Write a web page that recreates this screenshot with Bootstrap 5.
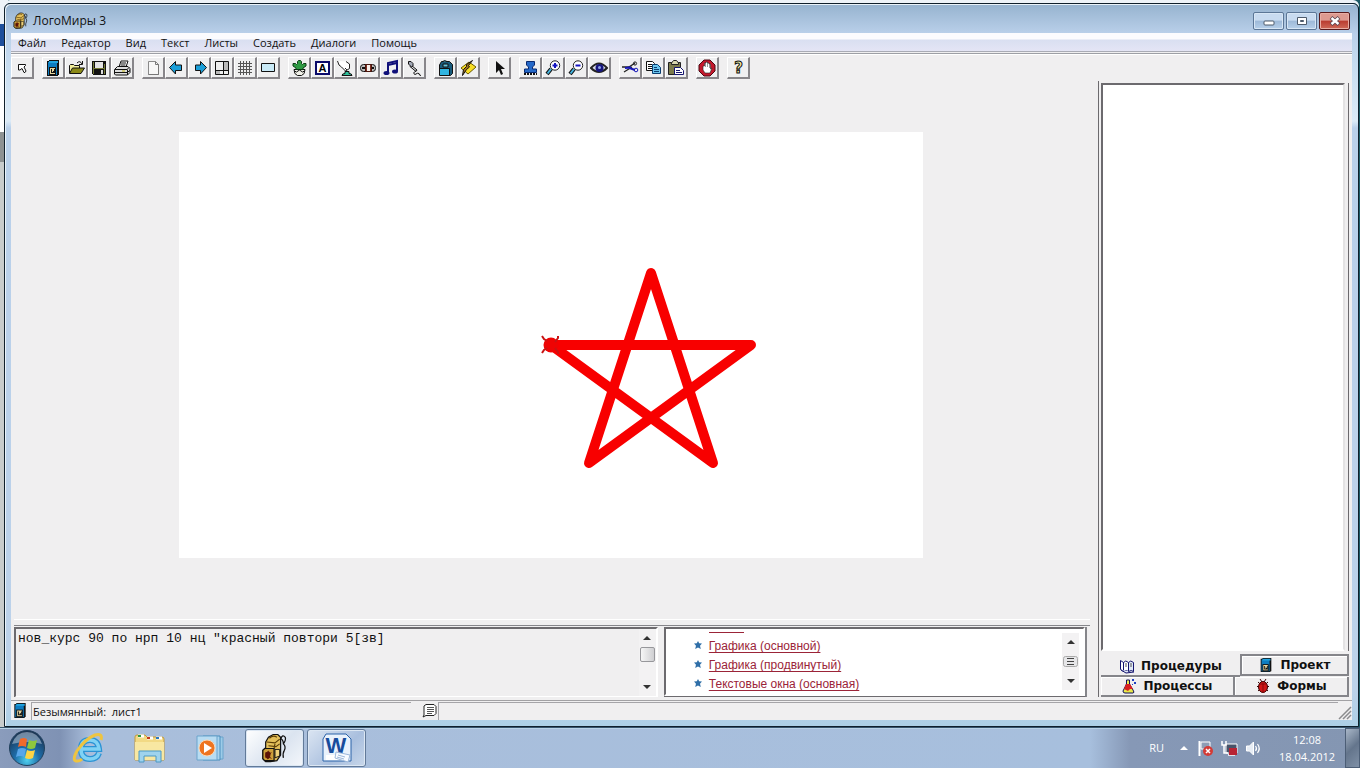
<!DOCTYPE html>
<html lang="ru">
<head>
<meta charset="utf-8">
<meta name="viewport" content="width=device-width, initial-scale=1">
<title>ЛогоМиры 3</title>
<link href="https://cdn.jsdelivr.net/npm/bootstrap@5.3.0/dist/css/bootstrap.min.css" rel="stylesheet">
<style>
:root { --face: #f0eff0; --shade: #85858a; --dark: #6c6a6e; --ui: "Open Sans", "Noto Sans", sans-serif; }
body { font-family: var(--ui); font-size: 11px; line-height: 16px; color: #111; background: #1c5a66 linear-gradient(#eef3f8 0 24px, #1e4f9c 24px 46px, #fff 46px 132px, #8d9192 132px 162px, #c8cccc 162px) 0 0 / 8px 100% no-repeat; }
button { font: inherit; color: inherit; background: none; border: 0; padding: 0; }
svg { display: block; flex: none; }
.app-window { margin: 3px 1px 0 4px; border: 1px solid #10202c; border-radius: 6px 6px 0 0; padding: 0 6px 6px; background: linear-gradient(#96b3cf, #bad0ea 30px, #c6dcf0 60px, #dcebf7 117px, #b9d0ea 124px, #bcd2ea 95%, #add0e6); box-shadow: inset 1px 1px 0 #eaf3fa, 0 -3px 0 #eef3f8; min-height: 0; }
.title-bar { height: 29px; padding: 5px 2px 0 2px; }
.title-bar h1 { font-size: 12px; line-height: 16px; }
.win-group { gap: 2px; }
.win-btn { width: 31px; height: 18px; border: 1px solid #5b7696; border-radius: 2px; background: linear-gradient(#c8dbf0 45%, #9db9d8 50%, #b7d0ea); box-shadow: inset 0 0 0 1px #d7e6f5; }
.win-close { border-color: #581a1c; background: linear-gradient(#dd9a90 45%, #b93c30 50%, #cf6a58); box-shadow: inset 0 0 0 1px #e8aea4; }
.client { background: var(--face); min-height: 0; }
.menu-bar { height: 19px; padding: 2px 0 0 7px; gap: 15px; background: linear-gradient(#fbfbfe 6px, #d9dff1 7px, #e4e5f5); border-bottom: 1px solid #a9abb5; }
.tool-bar { height: 28px; margin-top: 1px; border-top: 1px solid #9d9fa5; padding-top: 3px; gap: 8px; box-shadow: inset 0 1px 0 #fff; }
.tool-btn { width: 23px; height: 22px; padding: 1px 0 0 1px; border: solid; border-width: 1px 2px 2px 1px; border-color: #fff #88868a #88868a #fff; background: #efeff0; }
.work { min-height: 0; }
.stage { flex: 1 1 0; min-height: 0; padding-bottom: 10px; }
.sheet { width: 100%; max-width: 744px; background: #fff; }
.splitter { height: 7px; border-top: 1px solid #fff; border-bottom: 1px solid var(--shade); margin-left: 3px; }
.panels { display: grid; grid-template-columns: 60% 1fr; gap: 6px; margin: 1px 3px 0 3px; height: 70px; }
.sunken { border: 2px solid; border-color: var(--dark) #fff #fff var(--dark); }
.command { flex: 1; resize: none; border: 0; outline: 0; background: transparent; padding: 2px 0 0 2px; font: 13px/16px "Liberation Mono", monospace; color: #111; }
.scroller { width: 17px; background: #f3f2f3; }
.scroller button { height: 18px; }
.thumb { height: 15px; width: 15px; border: 1px solid #97979b; border-radius: 2px; background: linear-gradient(90deg, #f6f6f6, #cfcfd2); }
.help-box { background: #fff; overflow: hidden; }
.help-list { margin: 0 0 0 28px; }
.help-list li { height: 19px; gap: 7px; }
.help-list a { font: 12px/19px "Liberation Sans", Arial, sans-serif; color: #9b2438; text-underline-offset: 2px; }
.help-list .help-top { height: 8px; padding-left: 15px; }
.help-top a { width: 35px; height: 4px; border-bottom: 1px solid #9b2438; }
.right-rule { border-right: 2px solid var(--shade); border-bottom: 2px solid var(--dark); }
.side { width: 251px; margin-right: 3px; border-left: 1px solid var(--dark); padding-left: 2px; }
.code-box { background: #fff; resize: none; outline: 0; border: 2px solid; border-color: var(--dark) #e4e3e4 #fff var(--dark); min-height: 0; }
.side-frame { border-right: 1px solid var(--dark); padding: 0 3px 0 0; min-height: 0; margin-top: 2px; }
.tabs { margin-top: 3px; }
.tab { font: bold 12px/18px "DejaVu Sans", sans-serif; gap: 6px; height: 20px; border: solid var(--shade); border-width: 0 2px 2px 0; box-shadow: inset 1px 1px 0 #fff; }
.tab-open { height: 23px; padding-top: 2px; border-width: 0 0 2px 0; box-shadow: none; }
.tab-back { border-width: 2px; height: 22px; }
.status { height: 20px; margin-top: 3px; border-top: 1px solid #a2a1a4; }
.status-cell { border: solid #a5a4a8; border-width: 1px 0 0 1px; height: 18px; padding-left: 1px; line-height: 17px; }
.file-cell { width: 380px; margin: 0 10px 0 2px; }
.task-bar { height: 41px; background: linear-gradient(90deg, #8a9cbc, #7f92b4 60px, #a9bedb 90px, #a7bfdd 1090px, #8698b6 1130px, #8496b2); border-top: 1px solid #38566e; box-shadow: inset 0 1px 0 #b9d2e6; }
.pinned { gap: 25px; margin: 0 18px 0 8px; }
.running { gap: 3px; }
.task-btn { width: 59px; height: 38px; border: 1px solid #627a99; border-radius: 3px; background: linear-gradient(135deg, #dbe5f2, #a9bfde 60%, #c8d7ea); box-shadow: inset 0 0 0 1px #dce7f3; }
.task-on { background: linear-gradient(135deg, #fff, #dbe4f0 55%, #f4f7fb); }
.tray { color: #fff; gap: 7px; }
.clock { line-height: 17px; width: 76px; }
.show-desktop { width: 15px; border: 1px solid #4c5e76; background: linear-gradient(135deg, #a9b7c8, #64758c 50%, #7f90a6); }
</style>
</head>
<body class="vh-100 overflow-hidden d-flex flex-column">

<svg width="0" height="0" class="position-absolute" aria-hidden="true">
  <symbol id="pack" viewBox="0 0 30 32">
    <path d="M21 6q2-6 5-2 1 3-2 7 3 3 1 7-2 3-1 8M20 5q4 1 4 6" fill="none" stroke="#111" stroke-width="1.3"/>
    <path d="M5 9l3-5 5-3h5l3 3v19l-4 6-7 1H5l-3-3V18l3-3z" fill="#e3bf5a" stroke="#111" stroke-width="1.3"/>
    <path d="M6 9l9 1 5-4M15 11l-1 5M8 13l8 1 4-3M9 5q4-4 8-1" fill="none" stroke="#5a3c05" stroke-width="1.2"/>
    <path d="M2 18l2-2h10v13H4l-2-2z" fill="#cda03a" stroke="#111" stroke-width="1.3"/><path d="M15 17h5v7l-5 2z" fill="#f0d27a" stroke="#111"/>
    <path d="M8 19l2 2-1 5-2 1-2-2V21zM5 20l6 7M11 20l-6 6" fill="#5d1408" stroke="#5d1408"/>
  </symbol>
  <symbol id="cabinet" viewBox="0 0 18 18"><path d="M3 2h2V1h10v15h-1v1H3z" fill="#111"/><path d="M4 3h9v13H4z" fill="#0d7cc0"/><path d="M5 2h9v2H5z" fill="#1fa3e0"/><path d="M5 8h7v8H5z" fill="#111"/><path d="M6 9h5v6H6z" fill="#e8d7a0"/><path d="M7 10h1v2h2v-2h1v4H7z" fill="#111"/><path d="M8 12h1v1H8z" fill="#e8d7a0"/></symbol>
  <symbol id="star" viewBox="0 0 8 8"><path d="M4 0l1.200 2.300L8 2.600 6 4.800 6.800 8 4 6.600 1.200 8 2 4.800 0 2.600l2.800-.3z" fill="#2f6fa8"/></symbol>
</svg>

<main class="app-window flex-grow-1 d-flex flex-column">
  <header class="title-bar d-flex align-items-center">
    <svg width="16" height="18"><use href="#pack"/></svg>
    <h1 class="m-0 ms-1 flex-grow-1 fw-normal">ЛогоМиры 3</h1>
    <div class="win-group d-flex">
      <button class="win-btn" aria-label="Свернуть"><svg class="mx-auto mt-1" width="12" height="6"><rect x="1" y="1" width="10" height="4" rx="1" fill="#fff" stroke="#4d5a6b"/></svg></button>
      <button class="win-btn" aria-label="Развернуть"><svg class="mx-auto" width="12" height="10"><path d="M1.500 1.500h9v7h-9z" fill="#fff" stroke="#4d5a6b"/><path d="M4.500 4.500h3v1h-3z" fill="#9db9d8" stroke="#4d5a6b"/></svg></button>
      <button class="win-btn win-close" aria-label="Закрыть"><svg class="mx-auto" width="12" height="10"><path d="M2 1.500l8 7M10 1.500l-8 7" stroke="#5b4650" stroke-width="4"/><path d="M2.500 2l7 6M9.500 2l-7 6" stroke="#fff" stroke-width="2.400"/></svg></button>
    </div>
  </header>

  <div class="client flex-grow-1 d-flex flex-column">
    <nav class="menu-bar d-flex align-items-center" aria-label="Меню">
      <button>Файл</button><button>Редактор</button><button>Вид</button><button>Текст</button><button>Листы</button><button>Создать</button><button>Диалоги</button><button>Помощь</button>
    </nav>

    <div class="tool-bar d-flex" role="toolbar" aria-label="Инструменты">
      <div class="d-flex">
        <button class="tool-btn" aria-label="Свернуть лист"><svg width="18" height="18"><path d="M5.500 5.500h7v1l-1.500 1.500 2 4-1 1.500h-1l-2-4-2 1.500h-1.500z" fill="#fff" stroke="#111"/></svg></button>
      </div>
      <div class="d-flex">
        <button class="tool-btn" aria-label="Новый проект"><svg width="18" height="18"><use href="#cabinet"/></svg></button>
        <button class="tool-btn" aria-label="Открыть"><svg width="18" height="18"><path d="M2.500 14V6.500l1-1h3l1 1h5V9" fill="#f3ef9a" stroke="#111"/><path d="M2.500 14.500l3-5.500h12l-3.500 5.500z" fill="#8c8a18" stroke="#111"/><path d="M10 4q3-3 5 1M15.500 2v3.500H12" fill="none" stroke="#111"/></svg></button>
        <button class="tool-btn" aria-label="Сохранить"><svg width="18" height="18" shape-rendering="crispEdges"><path d="M2 2h14v14H3l-1-1z" fill="#111"/><path d="M3 3h1v12H3zM14 5h1v10h-1zM4 9h10v1H4z" fill="#737a35"/><path d="M5 3h8v6H5z" fill="#e4e4e4"/><path d="M11 11h2v4h-2z" fill="#ddd"/></svg></button>
        <button class="tool-btn" aria-label="Печать"><svg width="18" height="18"><path d="M6 8l2-6h7l-2 6" fill="#fff" stroke="#111"/><path d="M8 4h5M7.500 6h5" stroke="#111"/><path d="M1.500 10.500l3-3H15l2 2v4L14.500 16h-12l-1-1z" fill="#ddd" stroke="#111"/><path d="M2 10.500h12l2-2M2 13.500h12l3-2M14.500 10.500V16" fill="none" stroke="#111"/><path d="M9 12h3" stroke="#c5b813"/></svg></button>
      </div>
      <div class="d-flex">
        <button class="tool-btn" aria-label="Новый лист"><svg width="18" height="18"><path d="M4.500 2.500h7l3 3v10h-10z" fill="#f7f7f7" stroke="#8a8a8a"/><path d="M11.500 2.500v3h3v10h-10" fill="none" stroke="#777"/></svg></button>
        <button class="tool-btn" aria-label="Предыдущий лист"><svg width="18" height="18"><path d="M2.500 8.500l6-6v3.500h6v5.500h-6V15z" fill="#1a9ed8" stroke="#111"/></svg></button>
        <button class="tool-btn" aria-label="Следующий лист"><svg width="18" height="18"><path d="M16.500 8.500l-6-6v3.500h-5v5.500h5V15z" fill="#1a9ed8" stroke="#111"/></svg></button>
        <button class="tool-btn" aria-label="Расположение"><svg width="18" height="18"><path d="M2.500 2.500h13v13h-13z" fill="#eee" stroke="#111"/><path d="M11 3h4v8h-4zM3 12h4v3H3z" fill="#b9b9b9"/><path d="M10.500 3v12M3 11.500h8M11 11.500h4" stroke="#111"/></svg></button>
        <button class="tool-btn" aria-label="Сетка"><svg width="18" height="18"><path d="M4.500 2v14M7.500 2v14M10.500 2v14M13.500 2v14M2 4.500h14M2 7.500h14M2 10.500h14M2 13.500h14" stroke="#555"/></svg></button>
        <button class="tool-btn" aria-label="Показ"><svg width="18" height="18"><path d="M2.500 4.500h13v8h-13z" fill="#c9eaf7" stroke="#111"/></svg></button>
      </div>
      <div class="d-flex">
        <button class="tool-btn" aria-label="Черепашка"><svg width="18" height="18"><path d="M4 10.500h11q0 5-3.500 6h-4Q4 15.500 4 10.500z" fill="#f0f0e8" stroke="#111"/><path d="M7.500 4.500v-2l1-1h2l1 1v2l1 1 1-1h2.500v2.500l-3 2v1.500h-7V9l-3-2V4.500h2.500l1 1z" fill="#2e9a43" stroke="#0c3d16"/><path d="M4.500 12l2 1 3-2 3 2 2-1" fill="none" stroke="#111"/></svg></button>
        <button class="tool-btn" aria-label="Текстовое окно"><svg width="18" height="18"><path d="M3 3h13v12H3z" fill="#fff" stroke="#0a0a6a" stroke-width="2"/><text x="9.500" y="13" text-anchor="middle" font-family="Liberation Sans" font-size="11" font-weight="bold">A</text></svg></button>
        <button class="tool-btn" aria-label="Кнопка"><svg width="18" height="18"><path d="M1.500 2q1 5 4 6l4 4 4-2.500V5L10 2.500M9 9l2 2" fill="#fff" stroke="#222"/><path d="M6 16.500q0-2 3-2v-2h4v2q3 0 3 2z" fill="#2fc09b" stroke="#111"/></svg></button>
        <button class="tool-btn" aria-label="Бегунок"><svg width="18" height="18"><rect x="1.500" y="5.500" width="15" height="7" rx="3" fill="#bbb" stroke="#111"/><path d="M3 9h12" stroke="#111" stroke-width="2"/><path d="M6.500 5.500h6v7h-6z" fill="#7c2e20" stroke="#4a150c"/><path d="M8 6h3v6H8z" fill="#f7f0ea"/></svg></button>
        <button class="tool-btn" aria-label="Мелодия"><svg width="18" height="18"><path d="M6 13V4l9-2v10" fill="none" stroke="#10107a" stroke-width="2"/><path d="M6 6l9-2" stroke="#10107a" stroke-width="2"/><ellipse cx="4.500" cy="14" rx="3" ry="2" fill="#10107a"/><ellipse cx="13" cy="12.500" rx="3" ry="2" fill="#10107a"/></svg></button>
        <button class="tool-btn" aria-label="Запись"><svg width="18" height="18"><path d="M6 6l6 5-1 1.500-6-5z" fill="#ddd" stroke="#111"/><path d="M3.500 2.500h2.500l2 2V7L6.500 8 3.500 5z" fill="#a4aab8" stroke="#111"/><path d="M11 12q-4 2-1 3.500 3-2 4-1 0 2 2 2" fill="none" stroke="#111"/></svg></button>
      </div>
      <div class="d-flex">
        <button class="tool-btn" aria-label="Ресурсы"><svg width="18" height="18"><path d="M3.500 6l2-3.500h8l3 3v9l-2 2h-11z" fill="#17597a" stroke="#111"/><path d="M7 2.500q1-2 4 0M7 5h5v3H7z" fill="#65c5df" stroke="#111"/><path d="M4 10h9v6H4z" fill="#31b5e2"/><path d="M3.500 9.500h10V16" fill="none" stroke="#111"/></svg></button>
        <button class="tool-btn" aria-label="Рисовалка"><svg width="18" height="18"><path d="M2 9l8-6 7 5-8 7z" fill="#f8de24" stroke="#6a5a00"/><path d="M13.500 1.500l-4 5 1 1.500-3 2.500-4 6 1-6 3-3v-2z" fill="#a3711c" stroke="#111"/></svg></button>
      </div>
      <div class="d-flex">
        <button class="tool-btn" aria-label="Указатель"><svg width="18" height="18"><path d="M6 2v12l3-3 2 5 2-1-2-5h4z" fill="#111"/></svg></button>
      </div>
      <div class="d-flex">
        <button class="tool-btn" aria-label="Штамп"><svg width="18" height="18"><path d="M5.500 2.500h8V6l-2 2v2h4v3.500h-12V10h4V8l-2-2z" fill="#2468c8" stroke="#0a2a70"/><path d="M3 15h13" stroke="#111" stroke-width="2" stroke-dasharray="2 1"/></svg></button>
        <button class="tool-btn" aria-label="Увеличить"><svg width="18" height="18"><path d="M7 10l-4 5" stroke="#111" stroke-width="4"/><path d="M7 10l-3.500 4.500" stroke="#45b5e0" stroke-width="2"/><circle cx="11" cy="6.500" r="4.700" fill="#fff" stroke="#222"/><path d="M11 4v5M8.500 6.500h5" stroke="#1414c0" stroke-width="2"/></svg></button>
        <button class="tool-btn" aria-label="Уменьшить"><svg width="18" height="18"><path d="M7 10l-4 5" stroke="#111" stroke-width="4"/><path d="M7 10l-3.500 4.500" stroke="#45b5e0" stroke-width="2"/><circle cx="11" cy="6.500" r="4.700" fill="#fff" stroke="#222"/><path d="M8.500 6.500h5" stroke="#1414c0" stroke-width="2"/></svg></button>
        <button class="tool-btn" aria-label="Глаз"><svg width="18" height="18"><path d="M1 9q8-9 16 0-8 8-16 0z" fill="#d8dce8" stroke="#222" stroke-width="2"/><circle cx="9.500" cy="9" r="4" fill="#16167e"/><circle cx="9.500" cy="8.500" r="1.500" fill="#8fa5e8"/></svg></button>
      </div>
      <div class="d-flex">
        <button class="tool-btn" aria-label="Вырезать"><svg width="18" height="18"><path d="M1 8h7l6-4M3 13l8-5" stroke="#222" stroke-width="1.300" fill="none"/><path d="M7 8.500l7 2.500M4 9l6-.5" stroke="#1818b8" stroke-width="2"/><circle cx="14" cy="4.500" r="1.600" fill="none" stroke="#222"/><circle cx="15" cy="11" r="1.800" fill="none" stroke="#1818b8"/></svg></button>
        <button class="tool-btn" aria-label="Копировать"><svg width="18" height="18"><path d="M2.500 2.500h6l2 2v7h-8z" fill="#fff" stroke="#111"/><path d="M4 5.500h4M4 7.500h4M4 9.500h4" stroke="#111"/><path d="M8.500 5.500h5l3 3v6h-8z" fill="#69c5ee" stroke="#0a3d70"/><path d="M10 8.500h3M10 10.500h5M10 12.500h5" stroke="#0a3d70"/></svg></button>
        <button class="tool-btn" aria-label="Вставить"><svg width="18" height="18"><path d="M1.500 3.500h12v12h-12z" fill="#7b7a4b" stroke="#222"/><path d="M4.500 5.500V4l2-2.500h3l2 2.500v1.500z" fill="#d9d8b0" stroke="#222"/><path d="M7.500 8.500h6l3 3v4h-9z" fill="#fff" stroke="#14146e"/><path d="M9 11.500h4M9 13.500h6" stroke="#14146e"/></svg></button>
      </div>
      <div class="d-flex">
        <button class="tool-btn" aria-label="Остановить всё"><svg width="18" height="18"><path d="M6 1h6l5 5v6l-5 5H6l-5-5V6z" fill="#c4182c" stroke="#4c0710"/><path d="M5 7h1.500V4H8V3h1.500v1H11v1h1.500v5L14 9l-2 5H7L5 11z" fill="#fff" stroke="#222" stroke-width=".6"/><path d="M7.500 4v4M9.500 4v4M11.500 5v4" stroke="#555" stroke-width=".6"/></svg></button>
      </div>
      <div class="d-flex">
        <button class="tool-btn" aria-label="Справка"><svg width="18" height="18"><text x="9.500" y="14" text-anchor="middle" font-family="DejaVu Sans" font-size="15" font-weight="bold" fill="#f3eda0" stroke="#111">?</text></svg></button>
      </div>
    </div>

    <div class="work flex-grow-1 d-flex">
      <section class="flex-grow-1 d-flex flex-column overflow-hidden">
        <div class="stage d-flex align-items-center justify-content-center">
          <svg class="sheet" viewBox="0 0 744 426" role="img" aria-label="Звезда">
            <path d="M372 213H572L410 331 472 141 534 331Z" fill="none" stroke="#f80000" stroke-width="10" stroke-linejoin="round"/>
            <circle cx="372" cy="213" r="7.500" fill="#ee0404"/>
            <path d="M363 204l2 3 3 2M379 204v2l-3 4M363 221l2-3 3-2M379 222v-2l-3-4" fill="none" stroke="#c81414" stroke-width="2"/>
          </svg>
        </div>
        <div class="splitter"></div>
        <div class="panels">
          <div class="sunken d-flex">
            <textarea class="command" aria-label="Командный центр" spellcheck="false">нов_курс 90 по нрп 10 нц "красный повтори 5[зв]</textarea>
            <div class="scroller d-flex flex-column align-items-center">
              <button aria-label="Вверх"><svg width="8" height="4"><path d="M0 4l4-4 4 4z" fill="#333"/></svg></button>
              <div class="thumb"></div>
              <button class="mt-auto" aria-label="Вниз"><svg width="8" height="4"><path d="M0 0l4 4 4-4z" fill="#333"/></svg></button>
            </div>
          </div>
          <div class="right-rule d-flex">
            <div class="sunken help-box flex-grow-1 d-flex">
              <ul class="help-list list-unstyled flex-grow-1">
                <li class="help-top d-flex"><a href="#" aria-label="К началу раздела"></a></li>
                <li class="d-flex"><svg class="mt-1" width="8" height="8"><use href="#star"/></svg><a href="#">Графика (основной)</a></li>
                <li class="d-flex"><svg class="mt-1" width="8" height="8"><use href="#star"/></svg><a href="#">Графика (продвинутый)</a></li>
                <li class="d-flex"><svg class="mt-1" width="8" height="8"><use href="#star"/></svg><a href="#">Текстовые окна (основная)</a></li>
              </ul>
              <div class="scroller d-flex flex-column align-items-center my-1 me-1">
                <button aria-label="Вверх"><svg width="8" height="4"><path d="M0 4l4-4 4 4z" fill="#333"/></svg></button>
                <svg class="my-auto" width="15" height="11"><rect x=".5" y=".5" width="14" height="10" rx="2" fill="#e6e6e8" stroke="#aaa"/><path d="M4 2.500h7M4 5.500h7M4 8.500h7" stroke="#444"/></svg>
                <button aria-label="Вниз"><svg width="8" height="4"><path d="M0 0l4 4 4-4z" fill="#333"/></svg></button>
              </div>
            </div>
          </div>
        </div>
      </section>

      <aside class="side d-flex flex-column flex-shrink-0 ms-2">
        <div class="side-frame flex-grow-1 d-flex"><textarea class="code-box w-100" aria-label="Процедуры"></textarea></div>
        <div role="tablist" class="tabs">
          <div class="d-flex align-items-start">
            <button class="tab tab-open d-flex align-items-center justify-content-center" style="width:56%" role="tab" aria-selected="true"><svg width="16" height="16"><path d="M1.500 2.500l3 2v9l-3-2zM4.500 4.500q2-3 5 0v9q-2-2-5 0z" fill="#fff" stroke="#14146e"/><path d="M9.500 4.500q2-3 5 0v9q-2-2-5 0zM2 12l5 3 8-1" fill="#dfe8f8" stroke="#14146e"/><path d="M6 6h2M6 8h2M11 6h2M11 8h2" stroke="#555"/></svg>Процедуры</button>
            <button class="tab tab-back d-flex align-items-center justify-content-center flex-grow-1" role="tab"><svg width="16" height="16"><use href="#cabinet"/></svg>Проект</button>
          </div>
          <div class="d-flex">
            <button class="tab d-flex align-items-center justify-content-center" style="width:54%" role="tab"><svg width="16" height="16"><path d="M5.500 2v4L2 13q0 2 2 2h8q2 0 0-3L8.500 6V2z" fill="#e8e84a" stroke="#10105a"/><path d="M5 6h4l3 5-3 0-2 2-4-2z" fill="#d82020"/><path d="M11 1h2v2h-2zM13 4h2v2h-2zM11 6h1v1h-1z" fill="#2040c0"/></svg>Процессы</button>
            <button class="tab d-flex align-items-center justify-content-center flex-grow-1" role="tab"><svg width="16" height="16"><path d="M3 4l10 9M13 4L3 13M2 8.500h12M5 1l2 3M11 1L9 4" stroke="#3c0404"/><ellipse cx="8" cy="9" rx="4.500" ry="5.500" fill="#d01616" stroke="#3c0404"/><path d="M8 5v10M4.500 6h7" stroke="#8c0808"/></svg>Формы</button>
          </div>
        </div>
      </aside>
    </div>

    <footer class="status d-flex align-items-center">
      <svg width="18" height="17"><use href="#cabinet"/></svg>
      <div class="status-cell file-cell">Безымянный:&nbsp; лист1</div>
      <svg width="17" height="16"><path d="M5 1.500h8l2 2v7l-2 2H5L2 14l1-2V3z" fill="#fff" stroke="#222"/><path d="M6 4.500h7M6 6.500h7M6 8.500h7M6 10.500h5" stroke="#555"/></svg>
      <div class="status-cell flex-grow-1"></div>
      <svg width="14" height="14" class="align-self-end"><path d="M1 13L13 1M5 13l8-8M9 13l4-4" stroke="#8b8b8e" stroke-width="1.500"/></svg>
    </footer>
  </div>
</main>

<footer class="task-bar d-flex align-items-center">
  <div class="d-flex align-items-center flex-grow-1">
    <div class="pinned d-flex align-items-center">
    <button aria-label="Пуск"><svg width="38" height="38"><defs><radialGradient id="orb" cx=".5" cy=".85" r=".8"><stop offset="0" stop-color="#4fd0ee"/><stop offset=".45" stop-color="#1d6ca8"/><stop offset="1" stop-color="#1c3554"/></radialGradient></defs><circle cx="19" cy="19" r="17.500" fill="url(#orb)" stroke="#21405c"/><path d="M4 15Q8 3 19 3t15 12q-15-4-30 0z" fill="#c6d8e8" opacity=".5"/><path d="M12 10q4-2 7 0l-1 8q-4-2-8 0z" fill="#f06a2c"/><path d="M21 11q4 2 8 0l-2 8q-4 2-8 0z" fill="#8fc83e"/><path d="M10 20q4-2 8 0l-2 8q-4-2-8 0z" fill="#58a6ea"/><path d="M19 21q4 2 8 0l-2 8q-4 2-8 0z" fill="#fdd445"/></svg></button>
    <button aria-label="Internet Explorer"><svg width="36" height="34"><path d="M28 22q-2 6-9 6-9 0-9-10 0-9 9-9 8 0 9 9H11" fill="none" stroke="#2b93d4" stroke-width="6"/><path d="M28 22q-2 6-9 6-9 0-9-10 0-9 9-9 8 0 9 9H11" fill="none" stroke="#7fd2f4" stroke-width="3.500"/><path d="M30 9q2-7-6-5Q14 8 6 20q-6 11 1 10 2 0 4-2" fill="none" stroke="#eec440" stroke-width="3"/></svg></button>
    <button aria-label="Проводник"><svg width="36" height="34"><path d="M3 6q0-2 2-2h8l2 2h15q2 0 2 2v21H3z" fill="#f2d984" stroke="#c29a3e"/><path d="M6 5h6M15 7h6M24 7h6" stroke="#fff" stroke-width="3"/><path d="M6 5h3" stroke="#2e9a43" stroke-width="2"/><path d="M15 7h3" stroke="#c4381c" stroke-width="2"/><path d="M24 7h3" stroke="#2c78c4" stroke-width="2"/><path d="M3 11h29v18H3z" fill="#f8e7a2"/><path d="M7 31V20h22v11h-5v-6H12v6z" fill="#9fd3ee" stroke="#4b98c4"/></svg></button>
    <button aria-label="Проигрыватель"><svg width="34" height="34"><path d="M16 6h14v22H16z" fill="#9ccbe8" stroke="#6aa4cc"/><path d="M10 5h17v24H10z" fill="#a9d3ee" stroke="#4a8ebc"/><path d="M4 5h20v24H4z" fill="#b8dcf2" stroke="#6aa4cc"/><circle cx="14" cy="17" r="8" fill="#ee7420" stroke="#f9d9b8"/><path d="M11 12l8 5-8 5z" fill="#fff"/></svg></button>
    </div>
    <div class="running d-flex">
    <button class="task-btn task-on" aria-label="ЛогоМиры 3"><svg class="mx-auto" width="28" height="31"><use href="#pack"/></svg></button>
    <button class="task-btn" aria-label="Microsoft Word"><svg class="mx-auto" width="32" height="32"><path d="M5 2h20l5 5v22H2V7z" fill="#e9f2fc" stroke="#2b62a8"/><path d="M5 23h22v5H5z" fill="#fff"/><text x="15" y="21" text-anchor="middle" font-family="Liberation Sans" font-weight="bold" font-size="22" fill="#174c9c">W</text><path d="M15 20l14 3-2 7-13-4z" fill="#f8fbff" stroke="#9db8da"/><path d="M17 23l7 2M16 25l7 2" stroke="#9db8da"/></svg></button>
    </div>
  </div>
  <div class="tray d-flex align-items-center">
    <span class="me-2">RU</span>
    <button aria-label="Скрытые значки"><svg width="10" height="8"><path d="M1 6l4-4 4 4z" fill="#fff"/></svg></button>
    <svg width="18" height="18"><path d="M3.500 2v15" stroke="#fff" stroke-width="2"/><path d="M5 3h9v7H5z" fill="#8e9db5" stroke="#fff"/><circle cx="12" cy="12" r="5" fill="#d33b36"/><path d="M10 10l4 4M14 10l-4 4" stroke="#fff" stroke-width="1.500"/></svg>
    <svg width="17" height="17"><path d="M5 4h11v9H5z" fill="#47536a" stroke="#fff"/><path d="M1 1v4h4V1M3 5v8h4M7 15h7" fill="none" stroke="#fff" stroke-width="1.500"/><path d="M8 8h8v7H8z" fill="#b82434"/></svg>
    <svg width="17" height="17"><path d="M1.500 6h3l4-4v13l-4-4h-3z" fill="#e6ecf4" stroke="#fff"/><path d="M10.500 6q2 2.500 0 5M12.500 4q3.500 4.500 0 9" fill="none" stroke="#fff" stroke-width="1.200"/></svg>
    <div class="clock text-center">12:08<br>18.04.2012</div>
  </div>
  <button class="show-desktop align-self-stretch" aria-label="Свернуть все окна"></button>
</footer>

<script src="https://cdn.jsdelivr.net/npm/bootstrap@5.3.0/dist/js/bootstrap.bundle.min.js"></script>
</body>
</html>
